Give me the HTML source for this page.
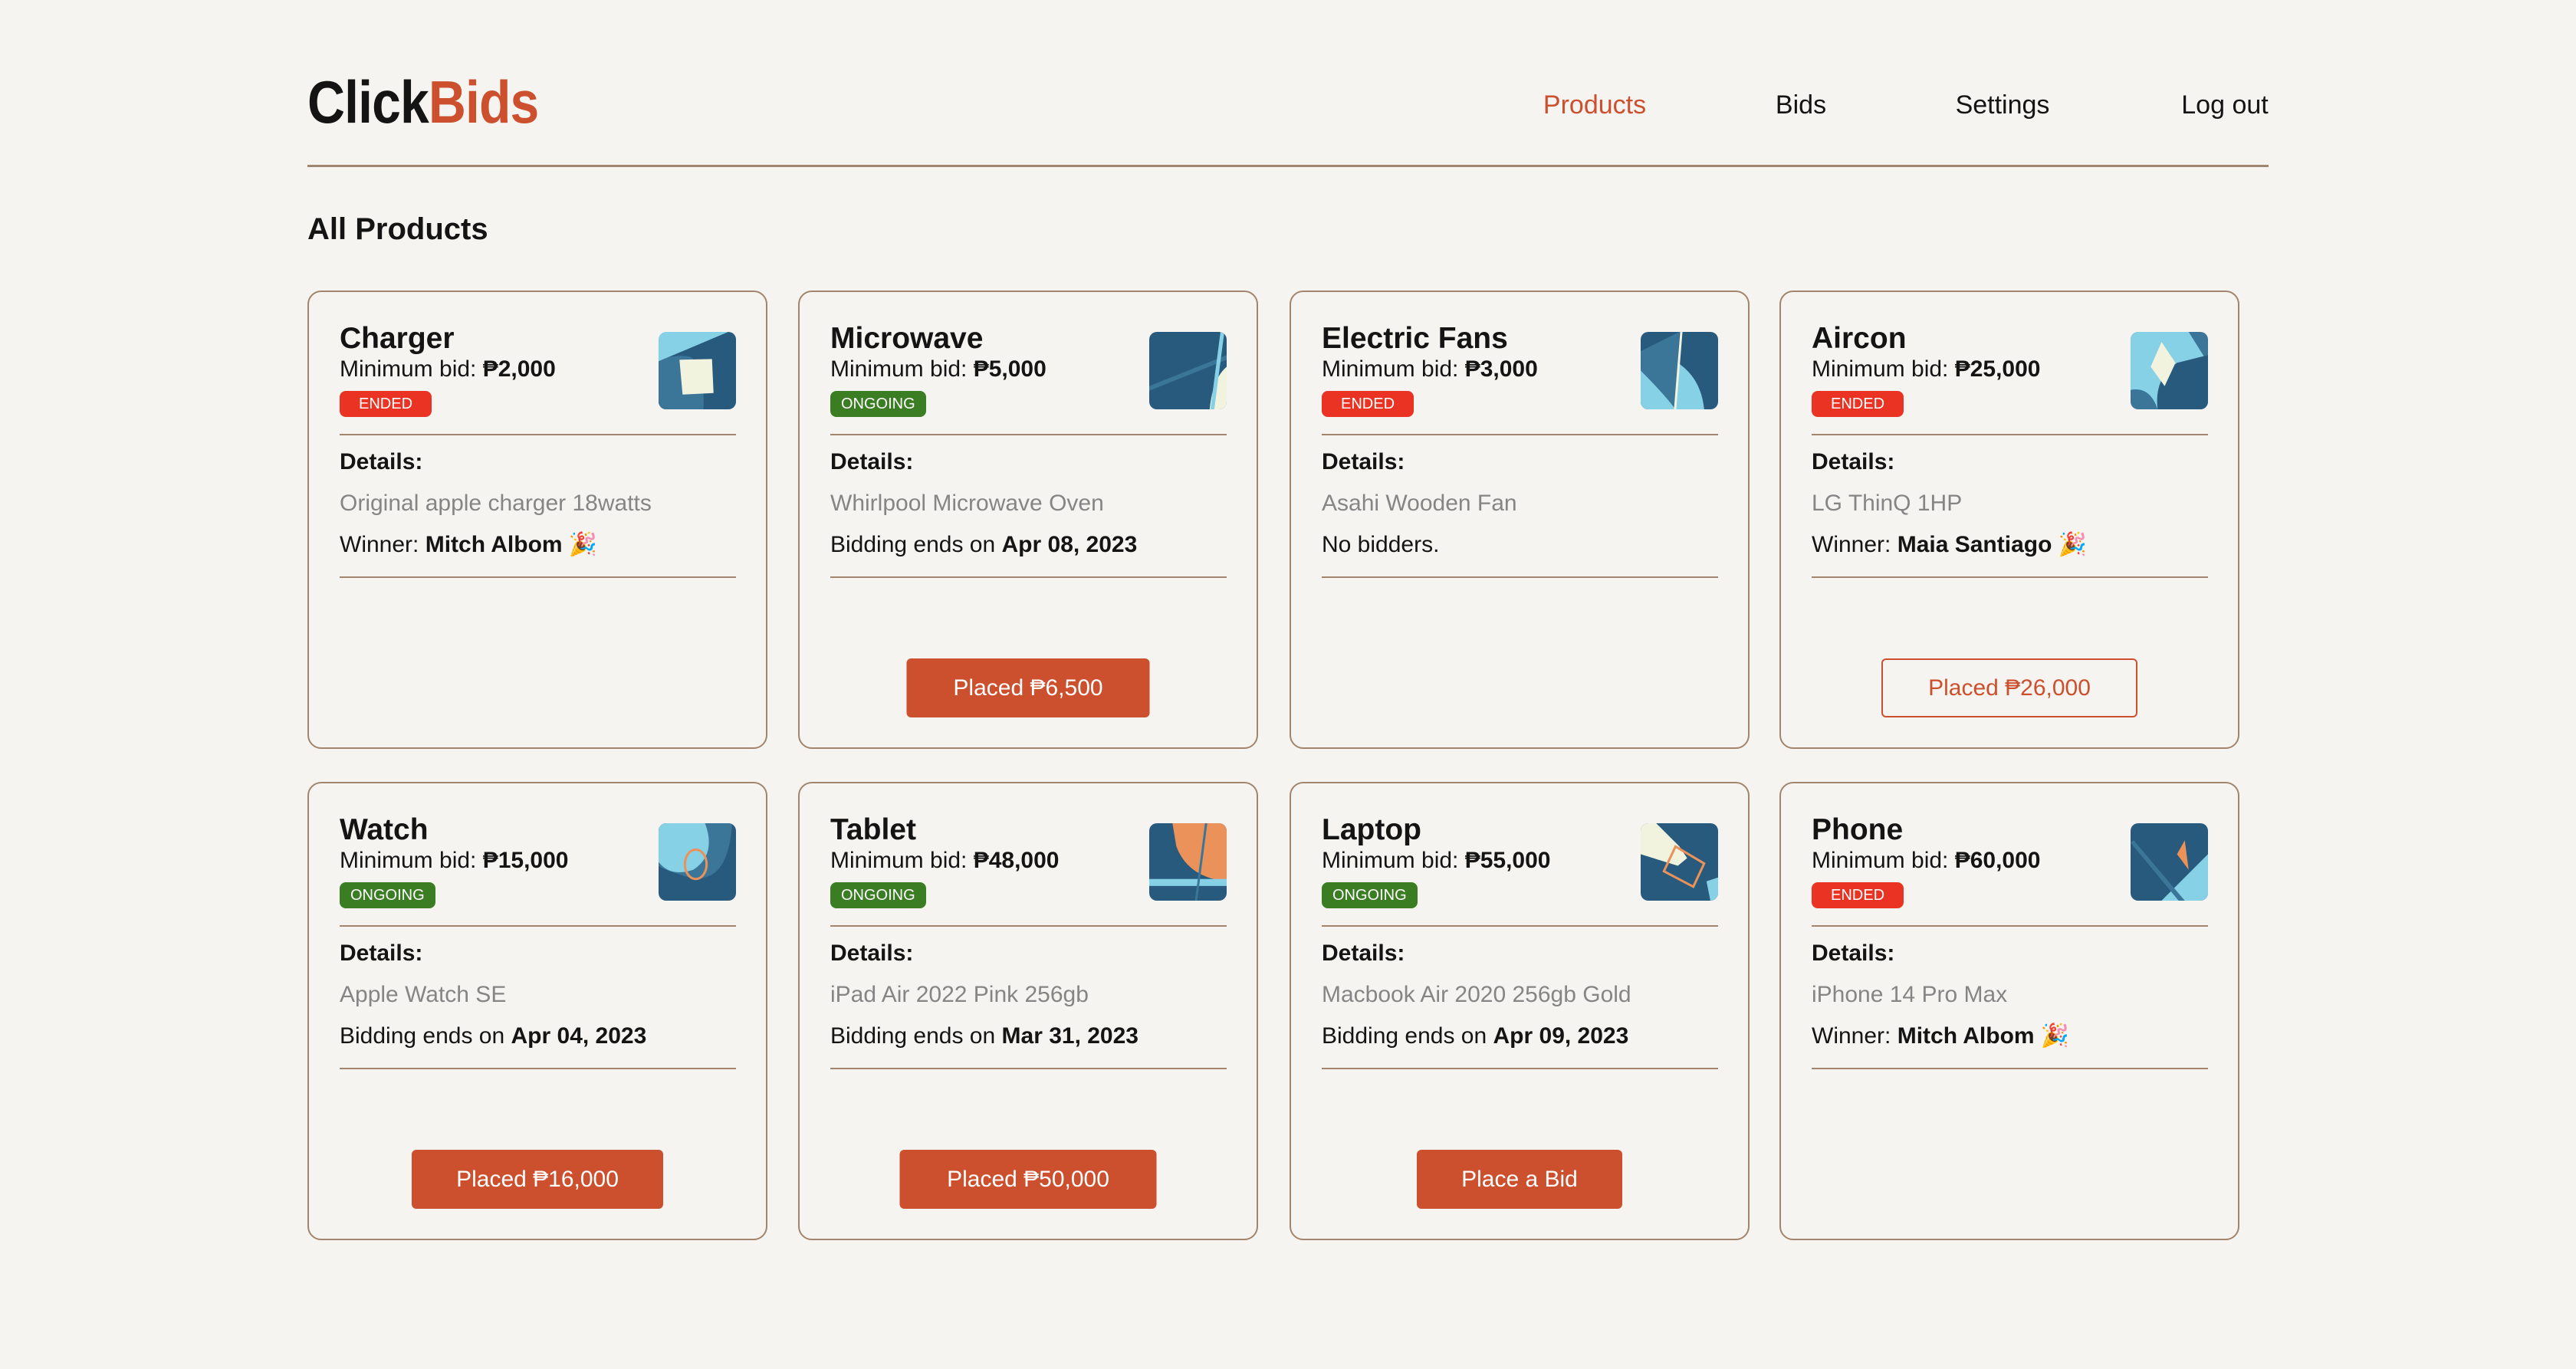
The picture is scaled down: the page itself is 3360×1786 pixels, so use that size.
<!DOCTYPE html>
<html><head><meta charset="utf-8"><style>
*{margin:0;padding:0;box-sizing:border-box}
body{width:3360px;height:1786px;background:#f5f4f0;font-family:"Liberation Sans",sans-serif;color:#141414;position:relative;overflow:hidden}
.logo{position:absolute;left:401px;top:88px;font-size:78px;font-weight:bold;letter-spacing:-1px;transform:scaleX(.87);transform-origin:left top;line-height:90px}
.logo span{color:#cc502e}
.nav{position:absolute;top:116px;font-size:34px;line-height:42px;transform:translateX(-50%)}
.rule{position:absolute;left:401px;top:215px;width:2558px;height:3px;background:#a3846c}
h1{position:absolute;left:401px;top:274px;font-size:40px;font-weight:bold;line-height:50px}
.card{position:absolute;width:600px;height:598px;border:2px solid #a3846c;border-radius:18px}
.card>*{position:absolute}
.t{left:40px;top:38px;font-size:39px;font-weight:bold;line-height:46px}
.m{left:40px;top:83px;font-size:30px;line-height:36px}
.b{left:40px;top:129px;height:34px;line-height:34px;font-size:20px;color:#fff;padding:0 14px;border-radius:8px}
.end{background:#ea3323;padding:0 25px}.on{background:#3a7d22}
.img{left:456px;top:52px;width:101px;height:101px;border-radius:10px;overflow:hidden}
.hr{left:40px;width:517px;height:2px;background:#a3846c}
.d{left:40px;top:203px;font-size:30px;font-weight:bold;line-height:38px}
.g{left:40px;top:257px;font-size:30px;color:#858585;line-height:38px}
.l{left:40px;top:311px;font-size:30px;line-height:38px}
.btn{top:478px;height:77px;line-height:77px;font-size:30px;text-align:center;border-radius:6px;background:#cc502e;color:#fff;left:50%;transform:translateX(-50%)}
.out{background:transparent;border:2px solid #cc502e;color:#cc502e;line-height:73px}
</style></head><body>
<div class="logo">Click<span>Bids</span></div>
<div class="nav" style="left:2080px;color:#cc502e">Products</div>
<div class="nav" style="left:2349px">Bids</div>
<div class="nav" style="left:2612px">Settings</div>
<div class="nav" style="left:2902px">Log out</div>
<div class="rule"></div>
<h1>All Products</h1>

<div class="card" style="left:401px;top:379px">
<div class="t">Charger</div><div class="m">Minimum bid: <b>₱2,000</b></div><div class="b end">ENDED</div>
<svg class="img" viewBox="0 0 100 100"><rect width="100" height="100" fill="#86d1e5"/><path d="M0 38 L90 0 L100 0 V100 H0Z" fill="#285a7e"/><path d="M0 38 Q20 28 40 32 Q60 40 58 100 H0Z" fill="#3b7699"/><path d="M27 36 L69 35 L71 79 L31 81Z" fill="#f1f3df"/></svg>
<div class="hr" style="top:185px"></div>
<div class="d">Details:</div><div class="g">Original apple charger 18watts</div><div class="l">Winner: <b>Mitch Albom</b> 🎉</div>
<div class="hr" style="top:371px"></div>
</div>

<div class="card" style="left:1041px;top:379px">
<div class="t">Microwave</div><div class="m">Minimum bid: <b>₱5,000</b></div><div class="b on">ONGOING</div>
<svg class="img" viewBox="0 0 100 100"><rect width="100" height="100" fill="#285a7e"/><path d="M0 70 L100 30 L100 36 L0 76Z" fill="#3b7699"/><path d="M78 100 Q82 60 100 45 V100Z" fill="#f1f3df"/><path d="M92 0 L97 0 L84 100 L79 100Z" fill="#86d1e5"/></svg>
<div class="hr" style="top:185px"></div>
<div class="d">Details:</div><div class="g">Whirlpool Microwave Oven</div><div class="l">Bidding ends on <b>Apr 08, 2023</b></div>
<div class="hr" style="top:371px"></div>
<div class="btn" style="width:317px">Placed ₱6,500</div>
</div>

<div class="card" style="left:1682px;top:379px">
<div class="t">Electric Fans</div><div class="m">Minimum bid: <b>₱3,000</b></div><div class="b end">ENDED</div>
<svg class="img" viewBox="0 0 100 100"><rect width="100" height="100" fill="#285a7e"/><path d="M0 25 L50 0 L45 100 L0 100Z" fill="#3b7699"/><path d="M0 50 Q30 80 45 100 H0Z" fill="#86d1e5"/><path d="M48 40 Q78 60 82 100 H45Z" fill="#86d1e5"/><path d="M51 0 L54 0 L46 100 L43 100Z" fill="#f1f3df"/></svg>
<div class="hr" style="top:185px"></div>
<div class="d">Details:</div><div class="g">Asahi Wooden Fan</div><div class="l">No bidders.</div>
<div class="hr" style="top:371px"></div>
</div>

<div class="card" style="left:2321px;top:379px">
<div class="t">Aircon</div><div class="m">Minimum bid: <b>₱25,000</b></div><div class="b end">ENDED</div>
<svg class="img" viewBox="0 0 100 100"><rect width="100" height="100" fill="#3b7699"/><path d="M0 0 H75 L100 40 L100 100 H35 Q25 70 0 75Z" fill="#86d1e5"/><path d="M35 100 Q30 60 60 40 L100 30 V100Z" fill="#285a7e"/><path d="M26 45 L40 13 L58 40 L44 70Z" fill="#f1f3df"/></svg>
<div class="hr" style="top:185px"></div>
<div class="d">Details:</div><div class="g">LG ThinQ 1HP</div><div class="l">Winner: <b>Maia Santiago</b> 🎉</div>
<div class="hr" style="top:371px"></div>
<div class="btn out" style="width:334px">Placed ₱26,000</div>
</div>

<div class="card" style="left:401px;top:1020px">
<div class="t">Watch</div><div class="m">Minimum bid: <b>₱15,000</b></div><div class="b on">ONGOING</div>
<svg class="img" viewBox="0 0 100 100"><rect width="100" height="100" fill="#285a7e"/><path d="M0 0 H95 Q90 80 40 70 Q5 60 0 55Z" fill="#3b7699"/><path d="M0 0 H60 Q75 40 45 60 Q15 70 0 50Z" fill="#86d1e5"/><ellipse cx="48" cy="53" rx="14" ry="19" fill="none" stroke="#ea9259" stroke-width="3"/></svg>
<div class="hr" style="top:185px"></div>
<div class="d">Details:</div><div class="g">Apple Watch SE</div><div class="l">Bidding ends on <b>Apr 04, 2023</b></div>
<div class="hr" style="top:371px"></div>
<div class="btn" style="width:328px">Placed ₱16,000</div>
</div>

<div class="card" style="left:1041px;top:1020px">
<div class="t">Tablet</div><div class="m">Minimum bid: <b>₱48,000</b></div><div class="b on">ONGOING</div>
<svg class="img" viewBox="0 0 100 100"><rect width="100" height="100" fill="#285a7e"/><path d="M30 0 H100 V75 Q50 70 35 30Z" fill="#ea9259"/><rect y="72" width="100" height="9" fill="#86d1e5"/><path d="M72 0 L75 0 L62 100 L59 100Z" fill="#3b7699"/></svg>
<div class="hr" style="top:185px"></div>
<div class="d">Details:</div><div class="g">iPad Air 2022 Pink 256gb</div><div class="l">Bidding ends on <b>Mar 31, 2023</b></div>
<div class="hr" style="top:371px"></div>
<div class="btn" style="width:335px">Placed ₱50,000</div>
</div>

<div class="card" style="left:1682px;top:1020px">
<div class="t">Laptop</div><div class="m">Minimum bid: <b>₱55,000</b></div><div class="b on">ONGOING</div>
<svg class="img" viewBox="0 0 100 100"><rect width="100" height="100" fill="#285a7e"/><path d="M0 0 H20 L50 30 L60 45 L48 55 L0 40Z" fill="#f1f3df"/><path d="M85 75 L100 70 V100 H90Z" fill="#86d1e5"/><path d="M45 30 L82 52 L68 82 L30 62Z" fill="none" stroke="#ea9259" stroke-width="3"/></svg>
<div class="hr" style="top:185px"></div>
<div class="d">Details:</div><div class="g">Macbook Air 2020 256gb Gold</div><div class="l">Bidding ends on <b>Apr 09, 2023</b></div>
<div class="hr" style="top:371px"></div>
<div class="btn" style="width:268px">Place a Bid</div>
</div>

<div class="card" style="left:2321px;top:1020px">
<div class="t">Phone</div><div class="m">Minimum bid: <b>₱60,000</b></div><div class="b end">ENDED</div>
<svg class="img" viewBox="0 0 100 100"><rect width="100" height="100" fill="#285a7e"/><path d="M40 100 L100 40 V100Z" fill="#86d1e5"/><path d="M0 25 L4 22 L70 100 L62 100Z" fill="#3b7699"/><path d="M60 40 L70 22 L75 60Z" fill="#ea9259"/></svg>
<div class="hr" style="top:185px"></div>
<div class="d">Details:</div><div class="g">iPhone 14 Pro Max</div><div class="l">Winner: <b>Mitch Albom</b> 🎉</div>
<div class="hr" style="top:371px"></div>
</div>
</body></html>
